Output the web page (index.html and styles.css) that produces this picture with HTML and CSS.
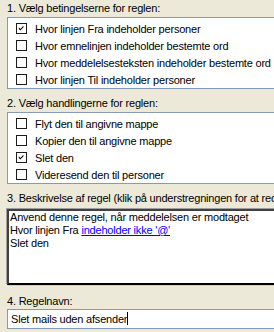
FILE: index.html
```html
<!DOCTYPE html>
<html lang="da">
<head>
  <meta charset="UTF-8">
  <title>Regelguide</title>
  <link rel="stylesheet" href="styles.css">
</head>
<body>

<div class="rule-page">
  <div class="step-label first">1. Vælg betingelserne for reglen:</div>
  <div class="check-list">
    <div class="check-row"><span class="check-box checked"><svg viewBox="0 0 9 9" width="9" height="9"><path d="M1 3 L3 5 L7 1 L7 3 L3 7 L1 5 Z"/></svg></span>Hvor linjen Fra indeholder personer</div>
    <div class="check-row"><span class="check-box"></span>Hvor emnelinjen indeholder bestemte ord</div>
    <div class="check-row"><span class="check-box"></span>Hvor meddelelsesteksten indeholder bestemte ord</div>
    <div class="check-row"><span class="check-box"></span>Hvor linjen Til indeholder personer</div>
  </div>

  <div class="step-label">2. Vælg handlingerne for reglen:</div>
  <div class="check-list">
    <div class="check-row"><span class="check-box"></span>Flyt den til angivne mappe</div>
    <div class="check-row"><span class="check-box"></span>Kopier den til angivne mappe</div>
    <div class="check-row"><span class="check-box checked"><svg viewBox="0 0 9 9" width="9" height="9"><path d="M1 3 L3 5 L7 1 L7 3 L3 7 L1 5 Z"/></svg></span>Slet den</div>
    <div class="check-row"><span class="check-box"></span>Videresend den til personer</div>
  </div>

  <div class="step-label">3. Beskrivelse af regel (klik på understregningen for at redigere):</div>
  <div class="rule-desc">
    <div>Anvend denne regel, når meddelelsen er modtaget</div>
    <div>Hvor linjen Fra <a href="#" class="rule-link">indeholder ikke '@'</a></div>
    <div>Slet den</div>
  </div>

  <div class="step-label last">4. Regelnavn:</div>
  <div class="name-input">Slet mails uden afsender<span class="caret"></span></div>
</div>

</body>
</html>
```

FILE: styles.css
```css
/* Page */
body {
  margin: 0;
  background: #ece9d8;
  font-family: "Liberation Sans", Arial, sans-serif;
  font-size: 11px;
  letter-spacing: -0.2px;
  color: #000;
  overflow: hidden;
}
.rule-page {
  padding-left: 7px;
  width: 320px;
}
/* Step titles */
.step-label {
  line-height: 13px;
  margin-top: 8px;
  margin-bottom: 2px;
  white-space: nowrap;
}
.step-label.first {
  margin-top: 2px;
}
.step-label.last {
  margin-top: 10px;
  margin-bottom: 1px;
}
/* Checkbox lists */
.check-list {
  background: #fff;
  border: 1px solid #7f9db9;
  padding-top: 2px;
}
.check-row {
  display: flex;
  align-items: center;
  height: 17px;
  white-space: nowrap;
}
.check-box {
  width: 11px;
  height: 11px;
  box-sizing: border-box;
  border: 1px solid #1c1c1c;
  background: #fff;
  margin-left: 8px;
  margin-right: 8px;
  display: flex;
  align-items: center;
  justify-content: center;
}
.check-box svg {
  fill: #000;
  width: 7px;
  height: 7px;
}
/* Description box */
.rule-desc {
  margin-top: 4px;
  height: 72px;
  background: #fff;
  border-style: solid;
  border-width: 2px;
  border-color: #404040 #fff #000 #404040;
  box-shadow: -1px -1px 0 #a0a0a0, 0 1px 0 #d4d0c8;
  padding-left: 1px;
  line-height: 13px;
  white-space: nowrap;
}
.rule-link {
  color: #0000ff;
  text-decoration: underline;
}
/* Name field */
.name-input {
  height: 18px;
  line-height: 18px;
  background: #fff;
  border: 1px solid #7f9db9;
  padding-left: 3px;
  white-space: nowrap;
}
.caret {
  display: inline-block;
  width: 1px;
  height: 13px;
  background: #000;
  vertical-align: -2px;
}
```
